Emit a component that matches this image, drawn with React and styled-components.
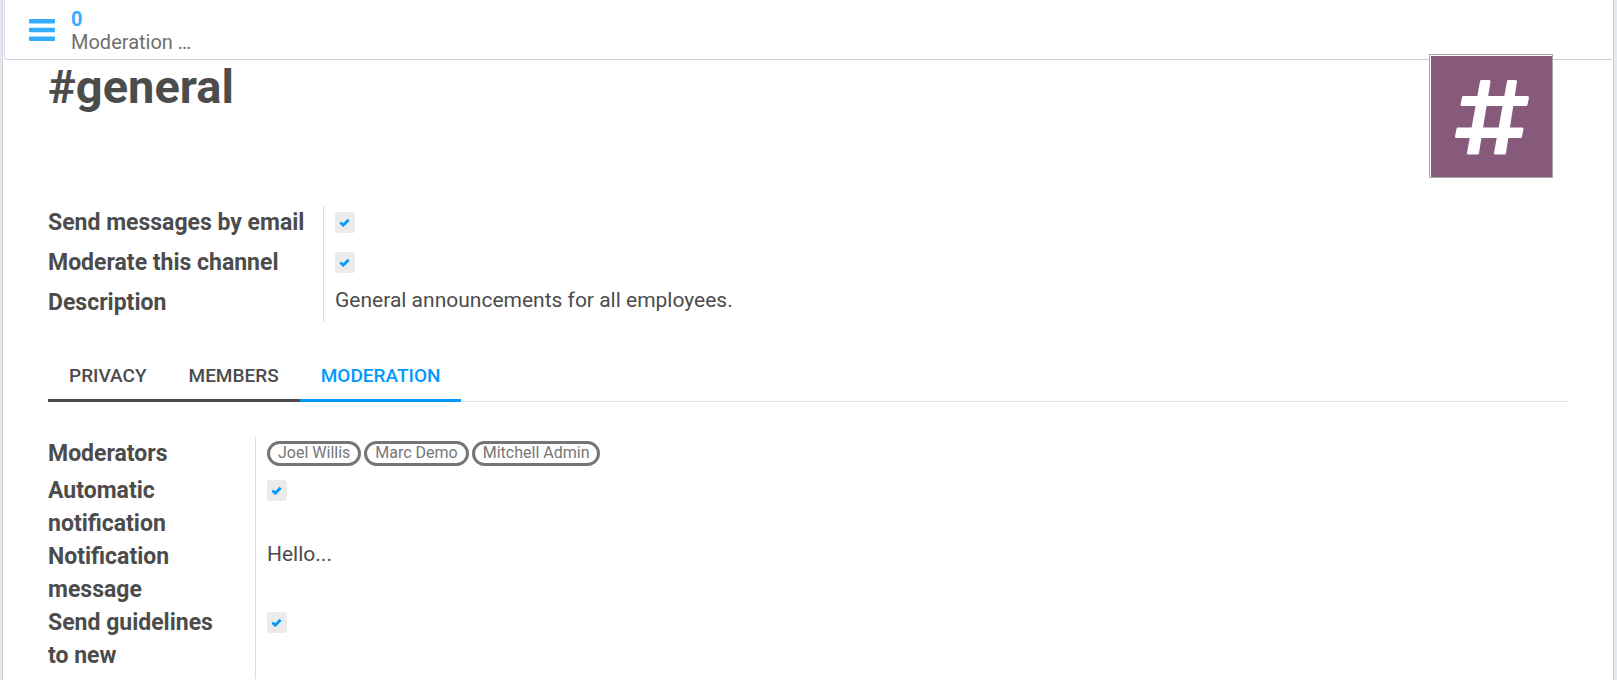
import React, { useState } from "react";
import styled, { createGlobalStyle } from "styled-components";

const Global = createGlobalStyle`
  * { box-sizing: border-box; }
  body { margin: 0; background: #e3e9ee; font-family: Roboto, "Liberation Sans", sans-serif; color: #4c4c4c; }
`;

const Sheet = styled.main`
  min-height: 100vh;
  margin: 0 3px 0 2px;
  background: #fff;
  border: solid #ced1d6;
  border-width: 0 1px;
`;

const StatBar = styled.header`
  height: 60px;
  margin: 0 1px;
  border-bottom: 1px solid #ced0d8;
  border-left: 1px solid #d6d9e0;
  border-bottom-left-radius: 3px;
`;

const StatButton = styled.button`
  display: flex;
  align-items: center;
  gap: 16px;
  height: 59px;
  padding: 0 24px;
  border: 0;
  background: none;
  font: inherit;
  font-size: 20px;
  line-height: 23px;
  text-align: left;
  color: #6f6f6f;
`;

const StatText = styled.span`
  display: flex;
  flex-direction: column;
  padding-top: 2px;
`;

const StatValue = styled.span`
  font-weight: 700;
  color: #35adff;
`;

const Body = styled.div`
  padding: 0 45px;
`;

const TitleRow = styled.div`
  display: flex;
  justify-content: space-between;
  height: 146px;
  padding-right: 15px;
`;

const Title = styled.h1`
  margin: 0;
  font-size: 47px;
  line-height: 54px;
  font-weight: 700;
`;

const Avatar = styled.svg`
  position: relative;
  width: 124px;
  height: 124px;
  margin-top: -6px;
  padding: 1px 0 0 1px;
  border: 1px solid #a5a5a8;
  background: #fff;
`;

const Group = styled.div`
  display: grid;
  grid-template-columns: ${(p) => p.$labels}px 1fr;
`;

const Label = styled.label`
  min-height: ${(p) => p.$rowHeight || 33}px;
  padding-right: 18px;
  font-size: 23px;
  line-height: 33px;
  font-weight: 700;
`;

const Value = styled.div`
  display: flex;
  align-items: flex-start;
  gap: 3px;
  padding-left: 11px;
  border-left: 1px solid #dcdcdc;
  font-size: 21px;
  line-height: 29px;
`;

const CheckWrap = styled.span`
  display: grid;
  margin-top: 6px;
  > * { grid-area: 1 / 1; }
  svg { place-self: center; pointer-events: none; margin-right: 1px; }
`;

const CheckInput = styled.input`
  appearance: none;
  width: 20px;
  height: 21px;
  margin: 0;
  border-radius: 3px;
  background: #ebebeb;
  &:not(:checked) + svg { visibility: hidden; }
`;

const Tag = styled.span`
  height: 25px;
  margin-top: 4px;
  padding: 0 8px;
  border: 3px solid #757575;
  border-radius: 13px;
  font-size: 16px;
  line-height: 18px;
  color: #777;
`;

const Tabs = styled.div`
  display: flex;
  margin: 30px 0 35px;
  box-shadow: inset 0 -1px #dee2e6;
`;

const Tab = styled.button`
  height: 50px;
  padding: 0 21px;
  border: 0;
  border-bottom: 3px solid currentColor;
  background: none;
  font: inherit;
  font-size: 19px;
  line-height: 47px;
  font-weight: 500;
  text-transform: uppercase;
  color: ${(p) => (p["aria-selected"] ? "#0099ff" : "#4c4c4c")};
`;

function Check({ id }) {
  const [on, setOn] = useState(true);
  return (
    <CheckWrap>
      <CheckInput id={id} type="checkbox" checked={on} onChange={() => setOn(!on)} />
      <svg width="11" height="9" viewBox="0 0 11 9" aria-hidden="true">
        <path d="M1.4 4.6 4.3 7.3 9.6 1.8" fill="none" stroke="#0099ff" strokeWidth="2.7" />
      </svg>
    </CheckWrap>
  );
}

export default function App() {
  const [tab, setTab] = useState("Moderation");
  return (
    <Sheet>
      <Global />
      <StatBar>
        <StatButton type="button">
          <svg width="26" height="22" viewBox="0 0 26 22" fill="#35adff" aria-hidden="true">
            <rect y="0" width="26" height="4.6" rx="1" />
            <rect y="8.7" width="26" height="4.6" rx="1" />
            <rect y="17.4" width="26" height="4.6" rx="1" />
          </svg>
          <StatText>
            <StatValue>0</StatValue>
            <span>Moderation …</span>
          </StatText>
        </StatButton>
      </StatBar>
      <Body>
        <TitleRow>
          <Title>#general</Title>
          <Avatar viewBox="0 0 121 121" role="img" aria-label="Channel">
            <rect width="121" height="121" fill="#875a7b" />
            <g fill="#fff" stroke="#fff" strokeWidth="3" strokeLinejoin="round">
              <path d="M50.5 25.5H58L46.5 97H37.5ZM77.5 25.5H84.5L73.5 97H64.5Z" />
              <path d="M32.5 41.5H96.5L95 48.5H31ZM27 73H91L89.5 80.5H25.5Z" />
            </g>
          </Avatar>
        </TitleRow>

        <Group $labels={275}>
          <Label $rowHeight={40} htmlFor="by-email">Send messages by email</Label>
          <Value><Check id="by-email" /></Value>
          <Label $rowHeight={40} htmlFor="moderate">Moderate this channel</Label>
          <Value><Check id="moderate" /></Value>
          <Label as="div" $rowHeight={36}>Description</Label>
          <Value>General announcements for all employees.</Value>
        </Group>

        <Tabs role="tablist">
          {["Privacy", "Members", "Moderation"].map((t) => (
            <Tab key={t} type="button" role="tab" aria-selected={t === tab} onClick={() => setTab(t)}>
              {t}
            </Tab>
          ))}
        </Tabs>

        <Group $labels={207}>
          <Label as="div" $rowHeight={37}>Moderators</Label>
          <Value>
            <Tag>Joel Willis</Tag>
            <Tag>Marc Demo</Tag>
            <Tag>Mitchell Admin</Tag>
          </Value>
          <Label htmlFor="auto-notify">Automatic notification</Label>
          <Value><Check id="auto-notify" /></Value>
          <Label as="div">Notification message</Label>
          <Value>Hello...</Value>
          <Label $rowHeight={73} htmlFor="guidelines">Send guidelines to new</Label>
          <Value><Check id="guidelines" /></Value>
        </Group>
      </Body>
    </Sheet>
  );
}
